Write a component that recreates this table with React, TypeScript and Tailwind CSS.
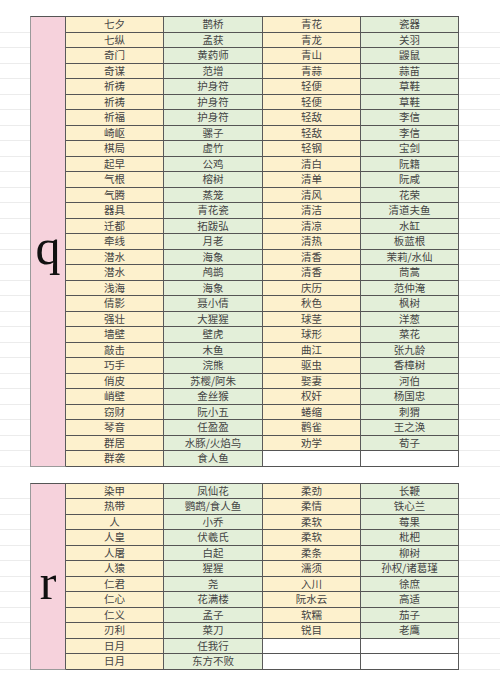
const topRows: string[][] = [
  ["七夕", "鹊桥", "青花", "瓷器"],
  ["七纵", "孟获", "青龙", "关羽"],
  ["奇门", "黄药师", "青山", "鼹鼠"],
  ["奇谋", "范增", "青蒜", "蒜苗"],
  ["祈祷", "护身符", "轻便", "草鞋"],
  ["祈祷", "护身符", "轻便", "草鞋"],
  ["祈福", "护身符", "轻敌", "李信"],
  ["崎岖", "骡子", "轻敌", "李信"],
  ["棋局", "虚竹", "轻钢", "宝剑"],
  ["起早", "公鸡", "清白", "阮籍"],
  ["气根", "榕树", "清单", "阮咸"],
  ["气腾", "蒸笼", "清风", "花荣"],
  ["器具", "青花瓷", "清洁", "清道夫鱼"],
  ["迁都", "拓跋弘", "清凉", "水缸"],
  ["牵线", "月老", "清热", "板蓝根"],
  ["潜水", "海象", "清香", "茉莉/水仙"],
  ["潜水", "鸬鹚", "清香", "茼蒿"],
  ["浅海", "海象", "庆历", "范仲淹"],
  ["倩影", "聂小倩", "秋色", "枫树"],
  ["强壮", "大猩猩", "球茎", "洋葱"],
  ["墙壁", "壁虎", "球形", "菜花"],
  ["敲击", "木鱼", "曲江", "张九龄"],
  ["巧手", "浣熊", "驱虫", "香樟树"],
  ["俏皮", "苏樱/阿朱", "娶妻", "河伯"],
  ["峭壁", "金丝猴", "权奸", "杨国忠"],
  ["窃财", "阮小五", "蜷缩", "刺猬"],
  ["琴音", "任盈盈", "鹳雀", "王之涣"],
  ["群居", "水豚/火焰鸟", "劝学", "荀子"],
  ["群袭", "食人鱼", "", ""],
];

const bottomRows: string[][] = [
  ["染甲", "凤仙花", "柔劲", "长鞭"],
  ["热带", "鹦鹉/食人鱼", "柔情", "铁心兰"],
  ["人", "小乔", "柔软", "莓果"],
  ["人皇", "伏羲氏", "柔软", "枇杷"],
  ["人屠", "白起", "柔条", "柳树"],
  ["人猿", "猩猩", "濡须", "孙权/诸葛瑾"],
  ["仁君", "尧", "入川", "徐庶"],
  ["仁心", "花满楼", "阮水云", "高适"],
  ["仁义", "孟子", "软糯", "茄子"],
  ["刃利", "菜刀", "锐目", "老鹰"],
  ["日月", "任我行", "", ""],
  ["日月", "东方不败", "", ""],
];

function Margin({ rows }: { rows: number }) {
  return (
    <div className="flex flex-col pt-px">
      {Array.from({ length: rows }).map((_, i) => (
        <div key={i} className="h-[15.5px] border-b border-[#ececec]" />
      ))}
    </div>
  );
}

function Cell({ text, tone }: { text: string; tone: "y" | "g" }) {
  const bg = text === "" ? "bg-white" : tone === "y" ? "bg-[#fdf1cd]" : "bg-[#e3efd9]";
  return (
    <div className={`${bg} flex items-center justify-center border-r border-[#5a5a5a] whitespace-nowrap`}>
      {text}
    </div>
  );
}

function Section({ letter, rows }: { letter: string; rows: string[][] }) {
  return (
    <div className="flex">
      <div className="w-[30px]">
        <Margin rows={rows.length} />
      </div>
      <div className="flex w-[429px] border-t border-l border-t-[#555] border-l-[#9a9a9a]">
        <div className="flex w-[36px] items-center justify-center border-r border-[#5a5a5a] border-b border-b-[#9a9a9a] bg-[#f6d2dc] pt-[11px] font-['Liberation_Serif',serif] text-[50px] leading-none text-[#111]">
          {letter}
        </div>
        <div className="flex flex-1 flex-col">
          {rows.map((r, i) => (
            <div
              key={i}
              className="grid h-[15.5px] grid-cols-[98px_99px_98px_98px] border-b border-[#555] text-[10.5px] leading-none text-[#444]"
            >
              <Cell text={r[0]} tone="y" />
              <Cell text={r[1]} tone="g" />
              <Cell text={r[2]} tone="y" />
              <Cell text={r[3]} tone="g" />
            </div>
          ))}
        </div>
      </div>
      <div className="flex-1">
        <Margin rows={rows.length} />
      </div>
    </div>
  );
}

export default function App() {
  return (
    <div className="h-[677px] w-[500px] overflow-hidden bg-white pt-[16px] font-['Noto_Sans_CJK_SC','Noto_Sans',sans-serif]">
      <Section letter="q" rows={topRows} />
      <div className="h-[16px]" />
      <Section letter="r" rows={bottomRows} />
    </div>
  );
}
